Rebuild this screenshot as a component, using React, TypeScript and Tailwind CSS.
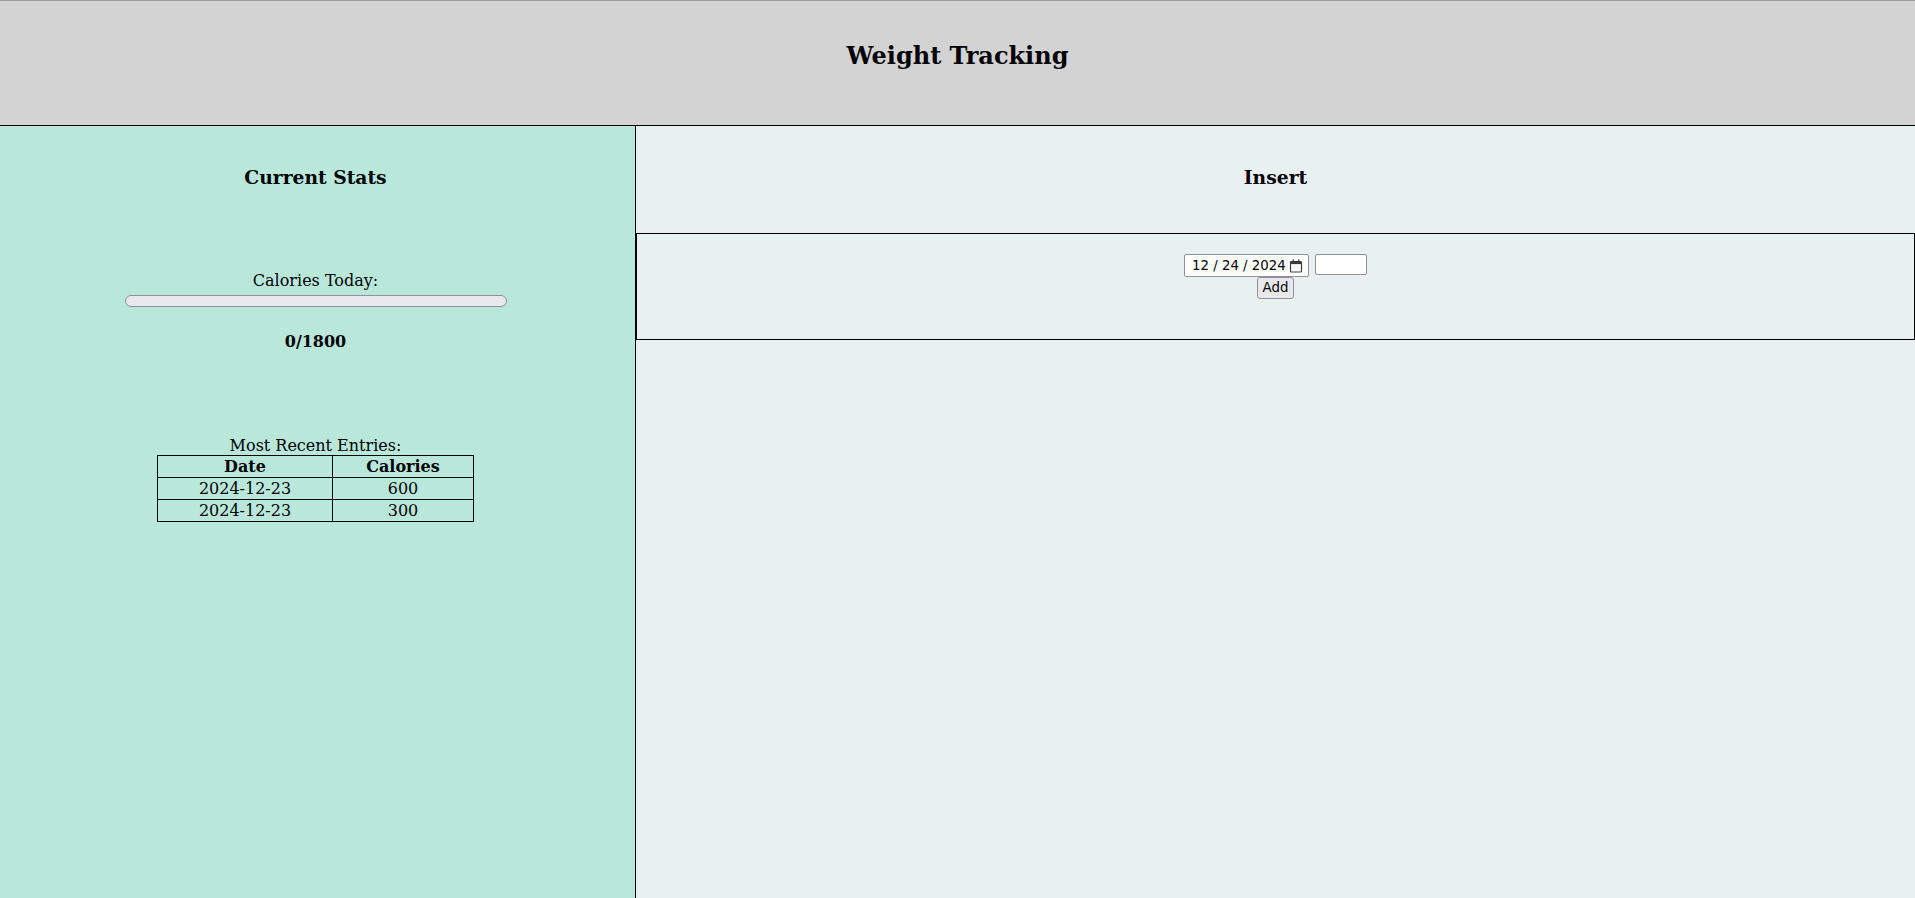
const entries = [
  { date: '2024-12-23', calories: 600 },
  { date: '2024-12-23', calories: 300 },
];

const GOAL = 1800;

function CalendarGlyph() {
  return (
    <svg width="14" height="14" viewBox="0 0 14 14" className="shrink-0">
      <rect x="1.5" y="2.5" width="11" height="10.5" rx="1" fill="none" stroke="#3b3b3b" strokeWidth="1.2" />
      <rect x="1.5" y="2.5" width="11" height="2.6" fill="#3b3b3b" />
      <rect x="3.6" y="0.5" width="1.3" height="3" fill="#3b3b3b" />
      <rect x="9.1" y="0.5" width="1.3" height="3" fill="#3b3b3b" />
    </svg>
  );
}

function Header() {
  return (
    <header className="h-[126px] shrink-0 border-t border-b border-t-[#9a9a9a] border-b-black bg-[#d3d3d3] pt-[41px] text-center">
      <h2 className="text-[24px] font-bold leading-[28px]">Weight Tracking</h2>
    </header>
  );
}

function CurrentStats() {
  const today = 0;
  const pct = (today / GOAL) * 100;
  return (
    <section className="flex w-[636px] shrink-0 flex-col items-center border-r border-black bg-[#b9e8db] pt-[40px] pr-[4px]">
      <h3 className="text-[18.72px] font-bold leading-[22px]">Current Stats</h3>

      <div className="mt-[83px] text-[16px] leading-[19px]">Calories Today:</div>
      <div className="mt-[5px] h-[12px] w-[382px] overflow-hidden rounded-full border border-[#8f8f9d] bg-[#e9e9ed]">
        <div className="h-full bg-[#0075ff]" style={{ width: `${pct}%` }} />
      </div>

      <h4 className="mt-[25px] text-[16px] font-bold leading-[19px]">
        {today}/{GOAL}
      </h4>

      <table className="mt-[85px] w-[317px] border-collapse text-[16px] leading-[19px]">
        <caption className="leading-[19px]">Most Recent Entries:</caption>
        <thead>
          <tr>
            <th className="w-[175px] border border-black py-px font-bold">Date</th>
            <th className="border border-black py-px font-bold">Calories</th>
          </tr>
        </thead>
        <tbody>
          {entries.map((e, i) => (
            <tr key={i}>
              <td className="border border-black py-px text-center">{e.date}</td>
              <td className="border border-black py-px text-center">{e.calories}</td>
            </tr>
          ))}
        </tbody>
      </table>
    </section>
  );
}

function InsertPanel() {
  return (
    <section className="flex min-w-0 flex-1 flex-col bg-[#e8f1f0] pt-[40px]">
      <h3 className="text-center text-[18.72px] font-bold leading-[22px]">Insert</h3>

      <form
        className="mt-[45px] flex flex-col items-center border border-black pt-[20px] pb-[40px] font-['DejaVu_Sans',sans-serif] text-[13.33px]"
        onSubmit={(e) => e.preventDefault()}
      >
        <div className="flex items-start gap-[6px]">
          <label className="flex h-[23px] w-[125px] items-center rounded-[2px] border border-[#8f8f9d] bg-white pl-[7px] pr-[5px] text-black">
            <span className="flex-1 whitespace-pre leading-none">12 / 24 / 2024</span>
            <CalendarGlyph />
          </label>
          <input
            type="number"
            className="h-[21px] w-[52px] rounded-[2px] border border-[#8f8f9d] bg-white px-[2px]"
          />
        </div>
        <button
          type="submit"
          className="h-[22px] w-[37px] rounded-[3px] border border-[#8f8f9d] bg-[#e9e9ed] text-center leading-none text-black"
        >
          Add
        </button>
      </form>
    </section>
  );
}

export default function App() {
  return (
    <div className="flex h-screen flex-col overflow-hidden font-['DejaVu_Serif',serif] text-black">
      <Header />
      <div className="flex flex-1">
        <CurrentStats />
        <InsertPanel />
      </div>
    </div>
  );
}
